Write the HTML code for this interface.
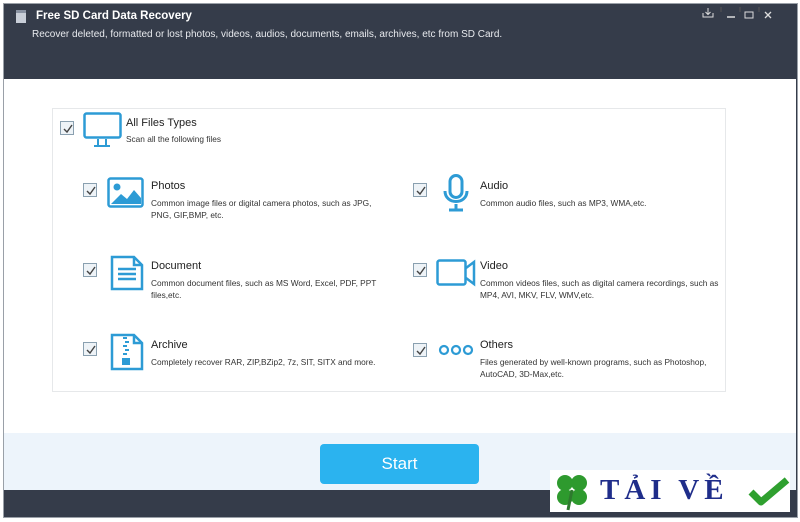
<!DOCTYPE html>
<html><head><meta charset="utf-8"><style>
*{margin:0;padding:0;box-sizing:border-box}
body{width:800px;height:522px;background:#fff;font-family:"Liberation Sans",sans-serif;position:relative;overflow:hidden}
.win{position:absolute;left:3px;top:3px;width:795px;height:515px;background:#353c4a;border:1px solid #9aa0a8}
.title{position:absolute;left:32px;top:6px;color:#fff;font-weight:bold;font-size:11.5px}
.sub{position:absolute;left:28px;top:25px;color:#e8eaee;font-size:10px}
.body{position:absolute;left:4px;top:79px;width:792px;height:354px;background:#fff}
.foot{position:absolute;left:4px;top:433px;width:792px;height:57px;background:#edf4fb}
.box{position:absolute;left:52px;top:108px;width:674px;height:284px;border:1px solid #e6e8ea}
.cb{position:absolute;width:14px;height:14px;border:1px solid #8aa0b0;background:#eef3f7}
.cb svg{position:absolute;left:1px;top:1px}
.h{position:absolute;font-size:11px;color:#222}
.d{position:absolute;font-size:8.3px;color:#333;line-height:12px}
.ic{position:absolute}
.btn{position:absolute;left:320px;top:444px;width:159px;height:40px;background:#2bb3ef;border-radius:4px;color:#fff;font-size:17px;text-align:center;line-height:40px}
</style></head><body>
<div class="win">
<div style="position:absolute;left:12px;top:6px;width:10px;height:13px;background:#c8ced8;border-top:3px solid #8a93a3"></div>
<div class="title">Free SD Card Data Recovery</div>
<div class="sub">Recover deleted, formatted or lost photos, videos, audios, documents, emails, archives, etc from SD Card.</div>
<svg style="position:absolute;left:697px;top:3px" width="90" height="12"><path d="M7 1v6M4.5 5L7 7.5 9.5 5M2 6v4h10V6" stroke="#ddd" fill="none"/><line x1="20" y1="5" x2="20" y2="0" stroke="#555"/><path d="M26 10h8" stroke="#ddd" stroke-width="1.5"/><line x1="39" y1="5" x2="39" y2="0" stroke="#555"/><rect x="44" y="5" width="8" height="6" fill="none" stroke="#ddd"/><line x1="58" y1="5" x2="58" y2="0" stroke="#555"/><path d="M64 5l6 6M70 5l-6 6" stroke="#ddd" stroke-width="1.3"/></svg>
</div>
<div class="body"></div>
<div class="foot"></div>
<div class="box"></div>

<div class="cb" style="left:60px;top:121px"><svg width="12" height="12"><path d="M2 6l3 3 5-7" stroke="#444" fill="none" stroke-width="1.4"/></svg></div>
<svg class="ic" style="left:83px;top:112px" width="40" height="36"><rect x="1.5" y="1.5" width="36" height="24" rx="2" fill="none" stroke="#2d9bd5" stroke-width="2.5"/><path d="M15 27v6M23 27v6M11 34h16" stroke="#2d9bd5" stroke-width="2"/></svg>
<div class="h" style="left:126px;top:117px">All Files Types</div>
<div class="d" style="left:126px;top:133px">Scan all the following files</div>

<div class="cb" style="left:83px;top:183px"><svg width="12" height="12"><path d="M2 6l3 3 5-7" stroke="#444" fill="none" stroke-width="1.4"/></svg></div>
<svg class="ic" style="left:107px;top:177px" width="38" height="32"><rect x="1.5" y="1.5" width="34" height="28" rx="2" fill="none" stroke="#2d9bd5" stroke-width="2.5"/><circle cx="10" cy="10" r="3.5" fill="#2d9bd5"/><path d="M4 27l10-10 6 5 7-9 7 8v6z" fill="#2d9bd5"/></svg>
<div class="h" style="left:151px;top:180px">Photos</div>
<div class="d" style="left:151px;top:197px">Common image files or digital camera photos, such as JPG,<br>PNG, GIF,BMP, etc.</div>

<div class="cb" style="left:413px;top:183px"><svg width="12" height="12"><path d="M2 6l3 3 5-7" stroke="#444" fill="none" stroke-width="1.4"/></svg></div>
<svg class="ic" style="left:442px;top:174px" width="30" height="38"><rect x="8" y="1.5" width="12" height="22" rx="6" fill="none" stroke="#2d9bd5" stroke-width="3"/><path d="M3 17c0 14 22 14 22 0M14 30v6M7 36h14" stroke="#2d9bd5" stroke-width="3" fill="none"/></svg>
<div class="h" style="left:480px;top:180px">Audio</div>
<div class="d" style="left:480px;top:197px">Common audio files, such as MP3, WMA,etc.</div>

<div class="cb" style="left:83px;top:263px"><svg width="12" height="12"><path d="M2 6l3 3 5-7" stroke="#444" fill="none" stroke-width="1.4"/></svg></div>
<svg class="ic" style="left:110px;top:255px" width="36" height="36"><path d="M2 2h22l8 8v24H2z" fill="none" stroke="#2d9bd5" stroke-width="2.5"/><path d="M24 2v8h8M8 14h18M8 19h18M8 24h18" stroke="#2d9bd5" stroke-width="2.5" fill="none"/></svg>
<div class="h" style="left:151px;top:260px">Document</div>
<div class="d" style="left:151px;top:277px">Common document files, such as MS Word, Excel, PDF, PPT<br>files,etc.</div>

<div class="cb" style="left:413px;top:263px"><svg width="12" height="12"><path d="M2 6l3 3 5-7" stroke="#444" fill="none" stroke-width="1.4"/></svg></div>
<svg class="ic" style="left:436px;top:259px" width="40" height="28"><rect x="1.5" y="1.5" width="28" height="24" rx="2" fill="none" stroke="#2d9bd5" stroke-width="2.5"/><path d="M30 9l8-6v22l-8-6" fill="none" stroke="#2d9bd5" stroke-width="2.5"/></svg>
<div class="h" style="left:480px;top:260px">Video</div>
<div class="d" style="left:480px;top:277px">Common videos files, such as digital camera recordings, such as<br>MP4, AVI, MKV, FLV, WMV,etc.</div>

<div class="cb" style="left:83px;top:342px"><svg width="12" height="12"><path d="M2 6l3 3 5-7" stroke="#444" fill="none" stroke-width="1.4"/></svg></div>
<svg class="ic" style="left:110px;top:333px" width="36" height="38"><path d="M2 2h22l8 8v26H2z" fill="none" stroke="#2d9bd5" stroke-width="2.5"/><path d="M24 2v8h8" stroke="#2d9bd5" stroke-width="2.5" fill="none"/><path d="M13 5h4M15 9h4M13 13h4M15 17h4M13 21h4" stroke="#2d9bd5" stroke-width="2"/><rect x="12" y="25" width="8" height="7" fill="#2d9bd5"/></svg>
<div class="h" style="left:151px;top:339px">Archive</div>
<div class="d" style="left:151px;top:356px">Completely recover RAR, ZIP,BZip2, 7z, SIT, SITX and more.</div>

<div class="cb" style="left:413px;top:343px"><svg width="12" height="12"><path d="M2 6l3 3 5-7" stroke="#444" fill="none" stroke-width="1.4"/></svg></div>
<svg class="ic" style="left:438px;top:344px" width="36" height="12"><circle cx="6" cy="6" r="4" fill="none" stroke="#2d9bd5" stroke-width="2.2"/><circle cx="18" cy="6" r="4" fill="none" stroke="#2d9bd5" stroke-width="2.2"/><circle cx="30" cy="6" r="4" fill="none" stroke="#2d9bd5" stroke-width="2.2"/></svg>
<div class="h" style="left:480px;top:339px">Others</div>
<div class="d" style="left:480px;top:356px">Files generated by well-known programs, such as Photoshop,<br>AutoCAD, 3D-Max,etc.</div>

<div class="btn">Start</div>

<div style="position:absolute;left:550px;top:470px;width:240px;height:42px;background:#fff"></div>
<svg style="position:absolute;left:552px;top:470px" width="40" height="42"><g fill="#2e9a2e"><circle cx="13" cy="13" r="8"/><circle cx="27" cy="13" r="8"/><circle cx="13" cy="27" r="8"/><circle cx="27" cy="27" r="8"/></g><path d="M20 20l-4 20" stroke="#2e7a2e" stroke-width="3"/></svg>
<div style="position:absolute;left:600px;top:474px;font-family:'Liberation Serif',serif;font-weight:bold;font-size:29px;color:#1f2d8a;letter-spacing:5px">TẢI VỀ</div>
<svg style="position:absolute;left:748px;top:476px" width="42" height="32"><path d="M3 16l10 10L39 4" stroke="#2fa02f" stroke-width="7" fill="none" stroke-linejoin="round"/></svg>
</body></html>
